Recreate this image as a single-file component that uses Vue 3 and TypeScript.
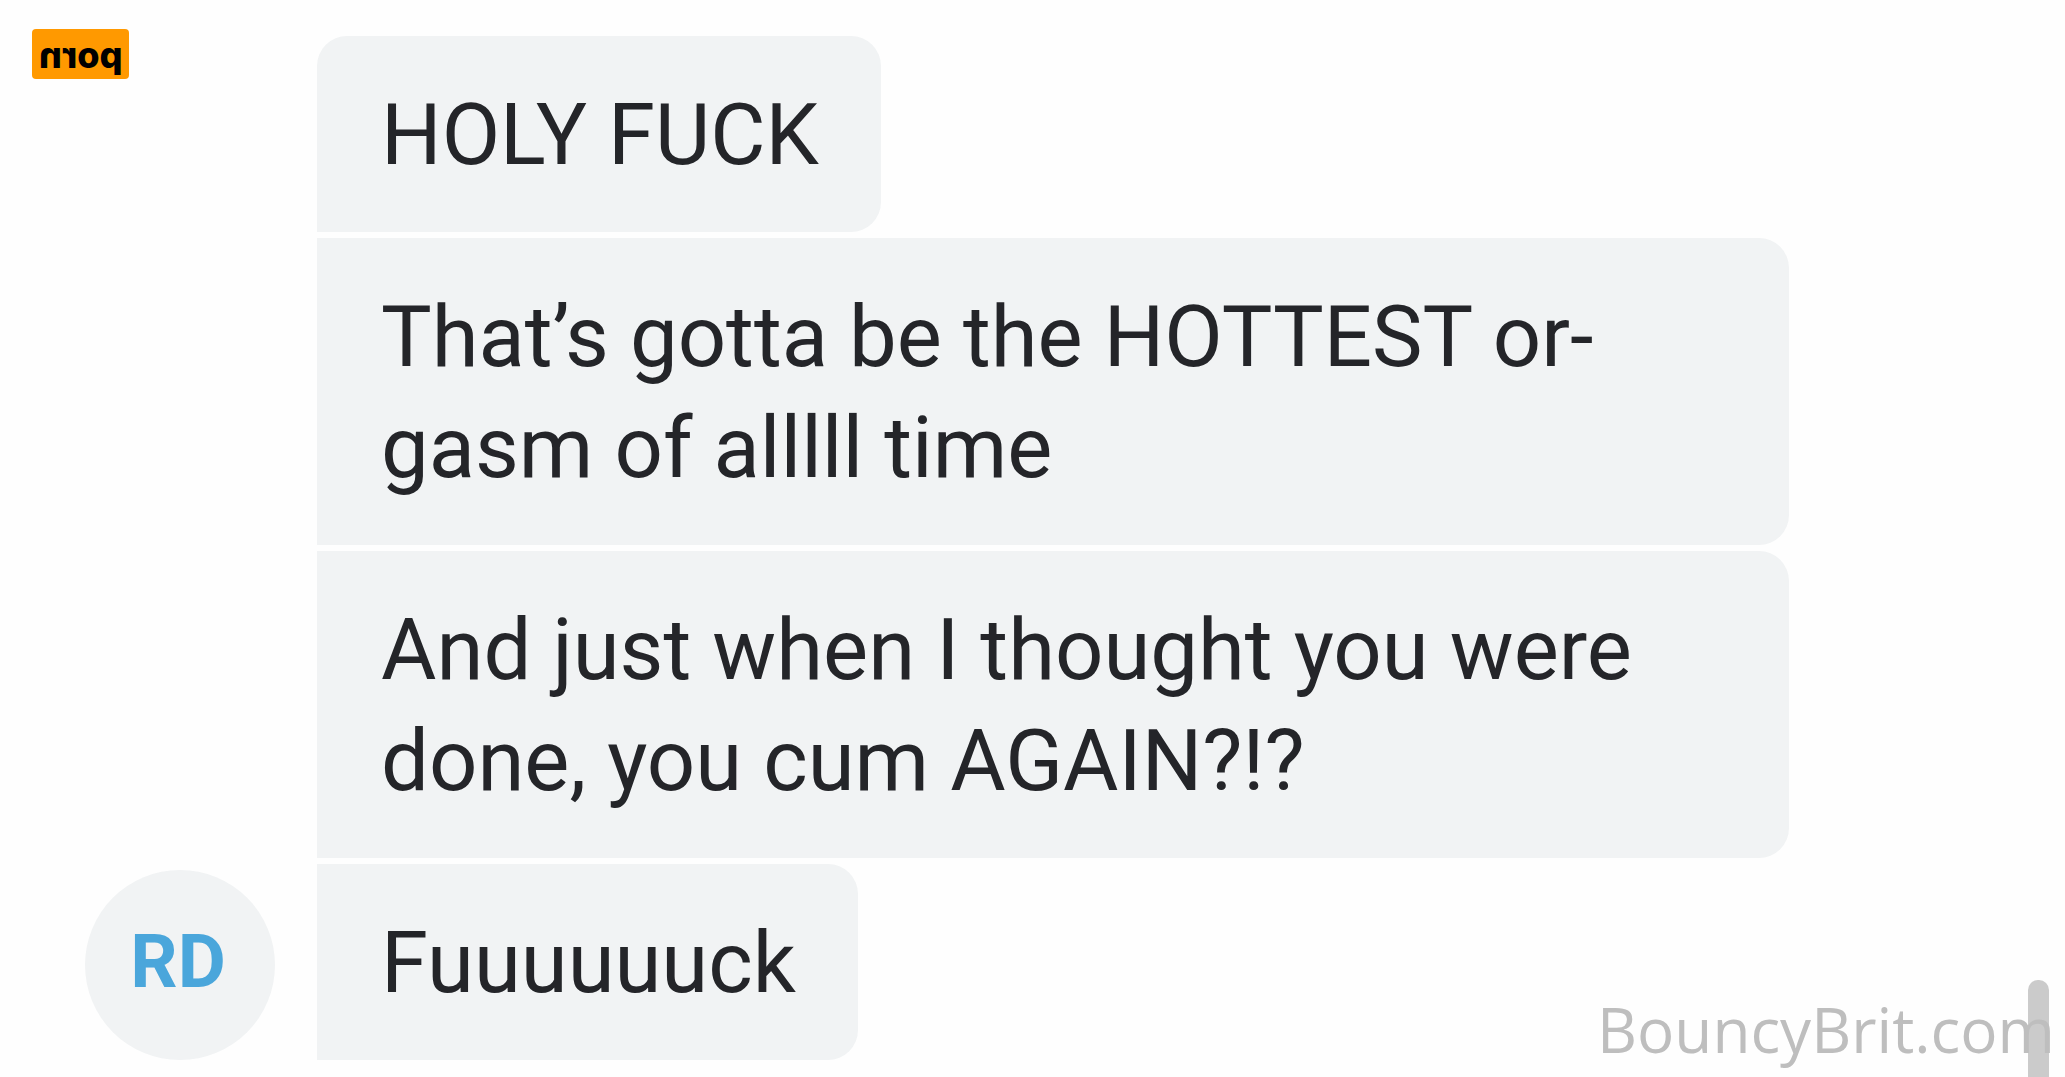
<script setup lang="ts">
interface Message {
  id: number
  text: string
}

const initials = 'RD'

// \u00AD marks where a long word may be hyphenated
const messages: Message[] = [
  { id: 1, text: 'HOLY FUCK' },
  { id: 2, text: 'That’s gotta be the HOTTEST or\u00ADgasm of alllll time' },
  { id: 3, text: 'And just when I thought you were done, you cum AGAIN?!?' },
  { id: 4, text: 'Fuuuuuuck' },
]
</script>

<template>
  <main class="page">
    <section class="thread">
      <div class="avatar">{{ initials }}</div>
      <ul class="messages">
        <li v-for="message in messages" :key="message.id" class="bubble">{{ message.text }}</li>
      </ul>
    </section>
    <span class="badge"><span class="badge-text">porn</span></span>
    <div class="scroll-thumb"></div>
    <span class="watermark">BouncyBrit.com</span>
  </main>
</template>

<style>
body {
  margin: 0;
  background: #fefefe;
}
</style>

<style scoped>
.page {
  position: relative;
  box-sizing: border-box;
  min-height: 100vh;
  padding: 36px 0 16px 85px;
  overflow: hidden;
  font-family: Roboto, "Liberation Sans", sans-serif;
}

.thread {
  display: flex;
  align-items: flex-end;
  gap: 42px;
}

.avatar {
  display: flex;
  flex: none;
  align-items: center;
  justify-content: center;
  box-sizing: border-box;
  width: 190px;
  height: 190px;
  padding: 0 4px 8px 0;
  border-radius: 50%;
  background: #f1f3f4;
  color: #4aa6db;
  font-size: 74px;
  font-weight: 700;
}

.messages {
  display: flex;
  flex: 1;
  flex-direction: column;
  align-items: flex-start;
  gap: 6px;
  min-width: 0;
  margin: 0;
  padding: 0 276px 0 0;
  list-style: none;
}

.bubble {
  padding: 44px 62px 41px 64px;
  border-radius: 0 30px 30px 0;
  background: #f1f3f4;
  color: #242529;
  font-size: 85px;
  line-height: 111px;
  hyphens: manual;
}

.bubble:first-child {
  border-top-left-radius: 30px;
}

.badge {
  position: absolute;
  top: 29px;
  left: 32px;
  display: flex;
  align-items: center;
  justify-content: center;
  box-sizing: border-box;
  width: 97px;
  height: 50px;
  padding-top: 2px;
  border-radius: 4px;
  background: #ff9900;
  color: #000;
  font-family: Inter, "Liberation Sans", sans-serif;
  font-size: 36px;
  font-weight: 800;
  line-height: 48px;
}

.badge-text {
  transform: scaleX(-1);
}

.scroll-thumb {
  position: absolute;
  right: 16px;
  bottom: 0;
  width: 21px;
  height: 97px;
  border-radius: 10px 10px 0 0;
  background: #cbcbcb;
}

.watermark {
  position: absolute;
  right: 10px;
  bottom: 6px;
  color: #bebebe;
  font-family: "Open Sans", "Noto Sans", sans-serif;
  font-size: 62px;
  line-height: 84px;
}
</style>
